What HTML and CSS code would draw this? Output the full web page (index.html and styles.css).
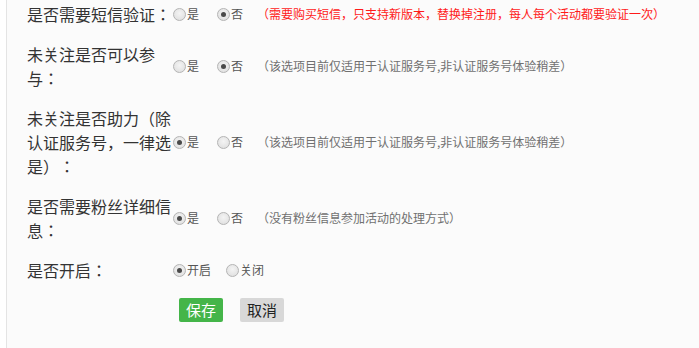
FILE: index.html
```html
<!DOCTYPE html>
<html lang="zh-CN">
  <head>
    <meta charset="utf-8" />
    <title>活动设置</title>
    <link rel="stylesheet" href="styles.css">
  </head>
  <body>
    <div class="panel">
      <div class="row">
        <div class="label">是否需要短信验证：</div>
        <div class="opts">
          <label class="opt"><input type="radio" name="sms">是</label>
          <label class="opt"><input type="radio" name="sms" checked>否</label>
          <span class="note red">（需要购买短信，只支持新版本，替换掉注册，每人每个活动都要验证一次）</span>
        </div>
      </div>
      <div class="row">
        <div class="label">未关注是否可以参与：</div>
        <div class="opts">
          <label class="opt"><input type="radio" name="join">是</label>
          <label class="opt"><input type="radio" name="join" checked>否</label>
          <span class="note">（该选项目前仅适用于认证服务号,非认证服务号体验稍差）</span>
        </div>
      </div>
      <div class="row">
        <div class="label">未关注是否助力（除认证服务号，一律选是）：</div>
        <div class="opts">
          <label class="opt"><input type="radio" name="help" checked>是</label>
          <label class="opt"><input type="radio" name="help">否</label>
          <span class="note">（该选项目前仅适用于认证服务号,非认证服务号体验稍差）</span>
        </div>
      </div>
      <div class="row">
        <div class="label">是否需要粉丝详细信息：</div>
        <div class="opts">
          <label class="opt"><input type="radio" name="fans" checked>是</label>
          <label class="opt"><input type="radio" name="fans">否</label>
          <span class="note">（没有粉丝信息参加活动的处理方式）</span>
        </div>
      </div>
      <div class="row">
        <div class="label">是否开启：</div>
        <div class="opts">
          <label class="opt tight"><input type="radio" name="open" checked>开启</label>
          <label class="opt tight"><input type="radio" name="open">关闭</label>
        </div>
      </div>
      <div class="actions">
        <button class="btn btn-save">保存</button>
        <button class="btn btn-cancel">取消</button>
      </div>
    </div>
  </body>
</html>
```
FILE: styles.css
```css
* {
  box-sizing: border-box;
}
body {
  margin: 0;
  background-color: #ffffff;
  font-family: "Noto Sans CJK JP", "Noto Sans CJK SC", "Noto Sans", sans-serif;
  font-feature-settings: "locl" 0, "chws" 0, "halt" 0;
  text-spacing-trim: space-all;
  color: #333;
}
.panel {
  margin-left: 6px;
  border-left: 1px solid #e4e4e4;
  background-color: #fbfbfb;
  min-height: 100vh;
  padding: 2px 0 0 20px;
}
.row {
  display: grid;
  grid-template-columns: 146px 1fr;
  align-items: center;
  margin-bottom: 16px;
}
.label {
  font-size: 16px;
  line-height: 24px;
  color: #333;
}
.opts {
  display: flex;
  align-items: center;
  font-size: 12px;
  line-height: 16px;
  color: #555;
}
.opt {
  display: flex;
  align-items: center;
  margin-right: 18px;
}
.opt.tight {
  margin-right: 15px;
}
.opt input {
  appearance: none;
  -webkit-appearance: none;
  width: 13px;
  height: 13px;
  margin: 0 1px 0 0;
  border: 1px solid #b4b4b4;
  border-radius: 50%;
  background: radial-gradient(circle at 50% 40%, #f4f4f4 0%, #dcdcdc 100%);
  position: relative;
}
.opt input:checked::after {
  content: "";
  position: absolute;
  top: 3px;
  left: 3px;
  width: 5px;
  height: 5px;
  border-radius: 50%;
  background-color: #4a4a4a;
}
.note {
  margin-left: -4px;
  color: #707070;
}
.note.red {
  color: #ff1a1a;
}
.actions {
  display: flex;
  gap: 17px;
  padding-left: 152px;
}
.btn {
  width: 44px;
  height: 24px;
  border: none;
  border-radius: 2px;
  font-family: "Noto Sans CJK JP", "Noto Sans CJK SC", sans-serif;
  font-size: 15px;
  line-height: 24px;
  padding: 0;
  cursor: pointer;
}
.btn-save {
  background-color: #44b549;
  color: #fff;
}
.btn-cancel {
  background-color: #d8d8d8;
  color: #222;
}
```
